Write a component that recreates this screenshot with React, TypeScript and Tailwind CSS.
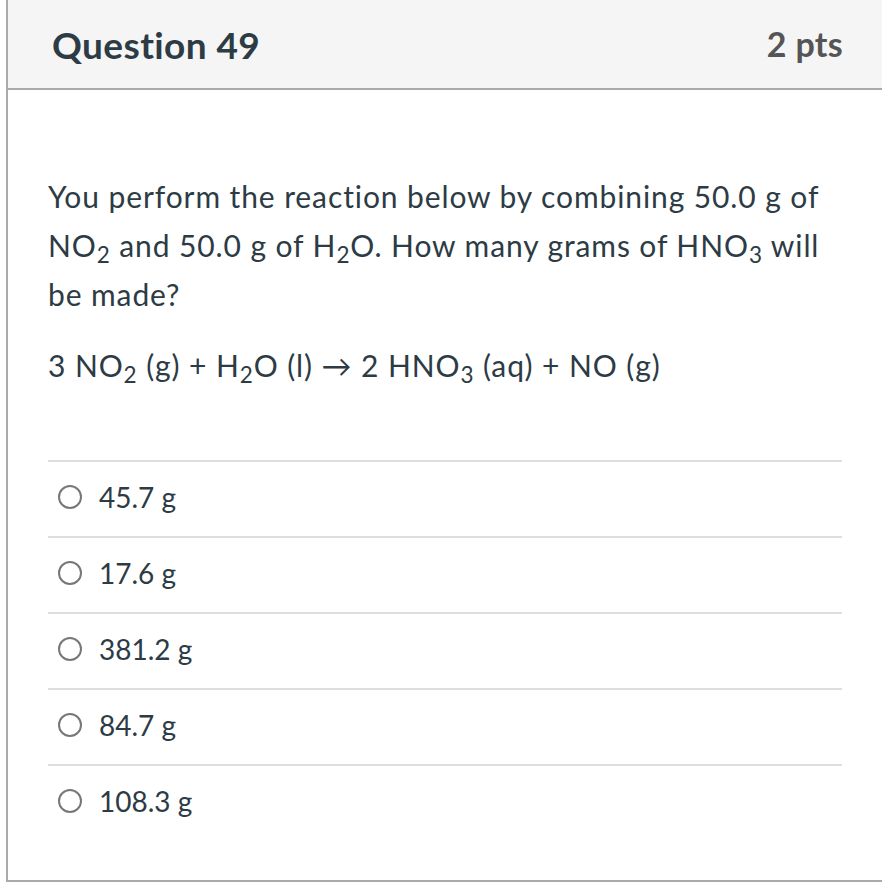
const answers = ["45.7 g", "17.6 g", "381.2 g", "84.7 g", "108.3 g"];

const Sub = ({ children }: { children: React.ReactNode }) => (
  <sub className="text-[75%]">{children}</sub>
);

export default function App() {
  return (
    <div
      className="w-[882px] h-[882px] overflow-hidden bg-white pl-[6px]"
      style={{ fontFamily: "Lato, 'Liberation Sans', sans-serif" }}
    >
      <div className="w-[876px] h-[882px] border-l-2 border-b-2 border-[#aaaaaa] flex flex-col">
        <div className="h-[90px] shrink-0 bg-[#f5f5f5] border-b-2 border-[#aaaaaa] flex items-center justify-between pl-[44px] pr-[39px]">
          <h2 className="text-[37px] font-bold tracking-[0.4px] text-[#2d3b45] leading-none">
            Question 49
          </h2>
          <span className="text-[34px] font-bold tracking-[0.3px] text-[#555555] leading-none">
            2 pts
          </span>
        </div>

        <div className="flex-1 px-[40px] pt-[82px] text-[#2d3b45]">
          <p className="text-[30px] leading-[49px] tracking-[0.9px]">
            You perform the reaction below by combining 50.0 g of NO<Sub>2</Sub> and 50.0 g of H
            <Sub>2</Sub>O. How many grams of HNO<Sub>3</Sub> will be made?
          </p>
          <p className="text-[30px] leading-[49px] tracking-[0.9px] mt-[22px]">
            3 NO<Sub>2</Sub> (g) + H<Sub>2</Sub>O (l) → 2 HNO<Sub>3</Sub> (aq) + NO (g)
          </p>

          <div className="mt-[70px]">
            {answers.map((a) => (
              <div
                key={a}
                className="h-[76px] border-t-2 border-[#dddddd] flex items-center pl-[10px] pb-[5px]"
              >
                <span className="w-[24px] h-[24px] rounded-full border-2 border-[#777777] shrink-0" />
                <span className="ml-[17px] text-[28px] leading-none">{a}</span>
              </div>
            ))}
          </div>
        </div>
      </div>
    </div>
  );
}
